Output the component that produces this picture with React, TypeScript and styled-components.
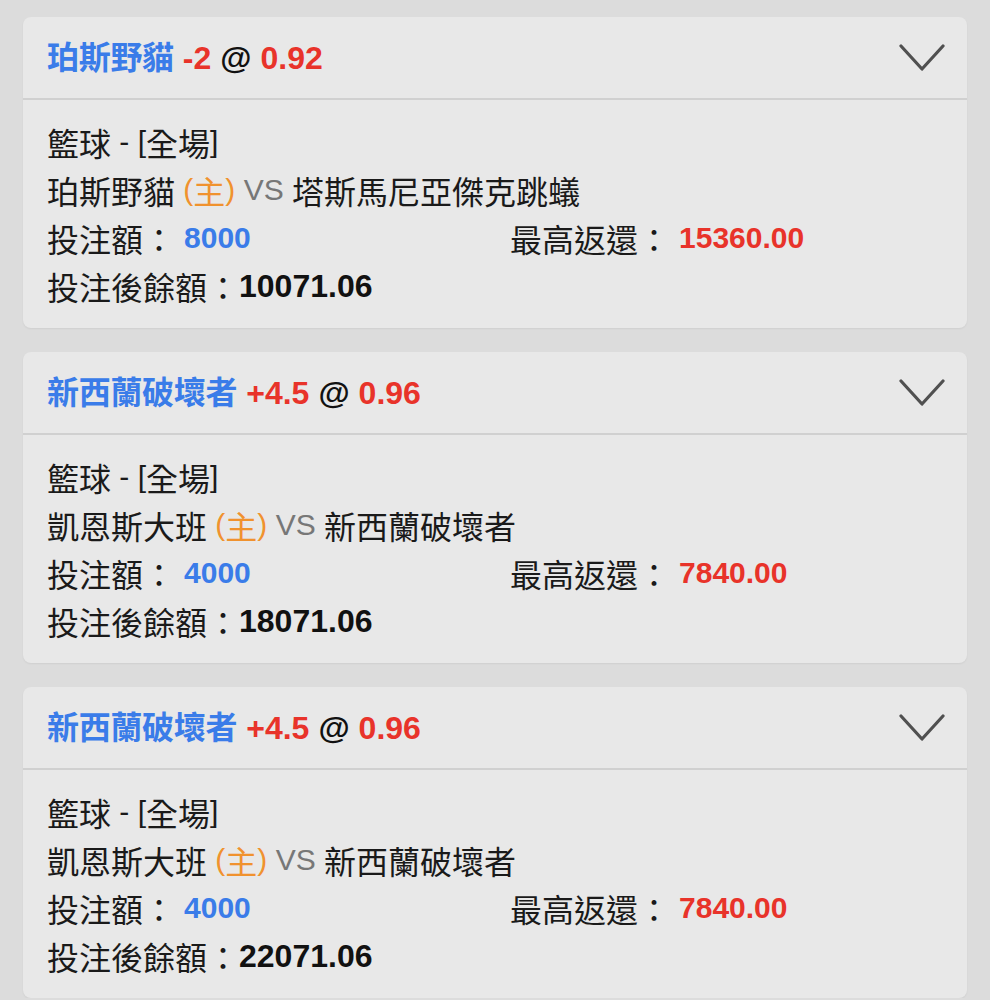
import React from "react";
import styled, { createGlobalStyle } from "styled-components";

const Global = createGlobalStyle`
  html, body { margin: 0; padding: 0; background: #dcdcdc; }
  body { font-family: "Liberation Sans", "Noto Sans CJK TC", sans-serif; }
`;

const Page = styled.div`
  display: flex;
  flex-direction: column;
  gap: 24px;
  padding: 17px 23px 0 23px;
  width: 990px;
  box-sizing: border-box;
`;

const Card = styled.section`
  background: #e8e8e8;
  border-radius: 8px;
  box-shadow: 0 1px 2px rgba(0, 0, 0, 0.06);
  overflow: hidden;
`;

const Header = styled.header`
  height: 81px;
  display: flex;
  align-items: center;
  justify-content: space-between;
  padding: 0 22px 0 24px;
  border-bottom: 2px solid #d0d0d0;
`;

const Title = styled.div`
  display: flex;
  align-items: baseline;
  gap: 9px;
  font-weight: 700;
  font-size: 32px;
  margin-top: -6px;
`;

const Team = styled.span`
  color: #3a7ce9;
  font-size: 32px;
  font-family: "Noto Sans CJK TC", sans-serif;
  font-weight: 700;
  letter-spacing: -0.3px;
`;

const Red = styled.span`
  color: #e8332a;
`;

const Black = styled.span`
  color: #111;
`;

const Body = styled.div`
  display: grid;
  grid-template-columns: 463px 1fr;
  grid-auto-rows: 48px;
  padding: 18px 24px 18px 24px;
  align-items: center;
  color: #1a1a1a;
`;

const Line = styled.div<{ $full?: boolean }>`
  ${(p) => (p.$full ? "grid-column: 1 / -1;" : "")}
  display: flex;
  align-items: center;
  white-space: nowrap;
`;

const Label = styled.span<{ $color?: string }>`
  font-family: "Noto Sans CJK TC", sans-serif;
  font-size: 32px;
  color: ${(p) => p.$color || "#1a1a1a"};
`;

const Latin = styled.span<{ $color?: string }>`
  font-family: "Liberation Sans", sans-serif;
  font-size: 30px;
  color: ${(p) => p.$color || "#1a1a1a"};
`;

const Value = styled.span<{ $color: string; $gap?: number; $size?: number }>`
  font-family: "Liberation Sans", sans-serif;
  font-weight: 700;
  font-size: ${(p) => p.$size ?? 30}px;
  color: ${(p) => p.$color};
  margin-left: ${(p) => p.$gap ?? 0}px;
`;

const Chevron = () => (
  <svg width="46" height="28" viewBox="0 0 46 28" fill="none">
    <path d="M2 2 L23 25 L44 2" stroke="#505050" strokeWidth="3.2" strokeLinecap="round" strokeLinejoin="round" />
  </svg>
);

type Bet = {
  pick: string;
  line: string;
  odds: string;
  home: string;
  away: string;
  stake: string;
  ret: string;
  balance: string;
};

const bets: Bet[] = [
  { pick: "珀斯野貓", line: "-2", odds: "0.92", home: "珀斯野貓", away: "塔斯馬尼亞傑克跳蟻", stake: "8000", ret: "15360.00", balance: "10071.06" },
  { pick: "新西蘭破壞者", line: "+4.5", odds: "0.96", home: "凱恩斯大班", away: "新西蘭破壞者", stake: "4000", ret: "7840.00", balance: "18071.06" },
  { pick: "新西蘭破壞者", line: "+4.5", odds: "0.96", home: "凱恩斯大班", away: "新西蘭破壞者", stake: "4000", ret: "7840.00", balance: "22071.06" },
];

export default function App() {
  return (
    <>
      <Global />
      <Page>
        {bets.map((b, i) => (
          <Card key={i}>
            <Header>
              <Title>
                <Team>{b.pick}</Team>
                <Red>{b.line}</Red>
                <Black>@</Black>
                <Red>{b.odds}</Red>
              </Title>
              <Chevron />
            </Header>
            <Body>
              <Line $full>
                <Label>籃球</Label>
                <Latin>&nbsp;-&nbsp;[</Latin>
                <Label>全場</Label>
                <Latin>]</Latin>
              </Line>
              <Line $full>
                <Label>{b.home}</Label>
                <Latin $color="#f0922e">&nbsp;(</Latin>
                <Label $color="#f0922e">主</Label>
                <Latin $color="#f0922e">)</Latin>
                <Latin $color="#777">&nbsp;VS&nbsp;</Latin>
                <Label>{b.away}</Label>
              </Line>
              <Line>
                <Label>投注額：</Label>
                <Value $color="#3a7ce9" $gap={9}>{b.stake}</Value>
              </Line>
              <Line>
                <Label>最高返還：</Label>
                <Value $color="#e8332a" $gap={9}>{b.ret}</Value>
              </Line>
              <Line $full>
                <Label>投注後餘額：</Label>
                <Value $color="#111" $size={32}>{b.balance}</Value>
              </Line>
            </Body>
          </Card>
        ))}
      </Page>
    </>
  );
}
